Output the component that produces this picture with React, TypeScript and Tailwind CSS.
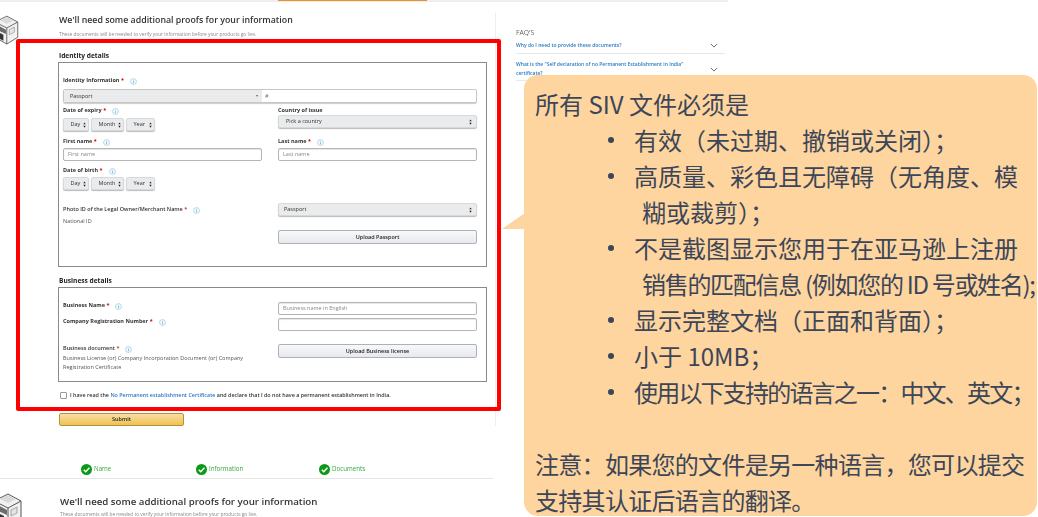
import React from "react";

const Info = () => (
  <svg viewBox="0 0 10 10" className="inline-block w-[7px] h-[7px] ml-[6px] shrink-0 relative top-[1px]">
    <circle cx="5" cy="5" r="4.3" fill="#eef7fb" stroke="#8fc3dc" strokeWidth="0.8" />
    <path d="M5 2.6v.8M5 4.4v3" stroke="#5a9dbf" strokeWidth="0.9" fill="none" />
  </svg>
);

const Label = ({ text, req = true, bold = true, info = true, cls = "" }: { text: string; req?: boolean; bold?: boolean; info?: boolean; cls?: string }) => (
  <div className={`h-[10px] pt-[1px] flex items-center whitespace-nowrap text-[5.5px] text-[#333] ${bold ? "font-bold" : "font-semibold"} ${cls}`}>
    <span>{text}</span>
    {req && <span className="text-[#d00] ml-[1.5px]">*</span>}
    {info && <Info />}
  </div>
);

const Updown = () => (
  <svg viewBox="0 0 4 8" className="w-[3px] h-[6px] shrink-0">
    <path d="M2 0.5 3.6 3H.4zM2 7.5 .4 5h3.2z" fill="#222" />
  </svg>
);

const MiniSelect = ({ text, w }: { text: string; w: string }) => (
  <div className={`${w} h-[13px] rounded-[2px] border border-[#d5d9d9] bg-[#eaebed] shadow-[0_1px_1px_#bbb] flex items-center justify-between pl-[6.5px] pr-[2px] text-[5.5px] text-[#333]`}>
    <span>{text}</span>
    <Updown />
  </div>
);

const Dates = () => (
  <div className="flex gap-[2px]">
    <MiniSelect text="Day" w="w-[26px]" />
    <MiniSelect text="Month" w="w-[33px]" />
    <MiniSelect text="Year" w="w-[29px]" />
  </div>
);

const WideSelect = ({ text, pad = "pl-[7px]" }: { text: string; pad?: string }) => (
  <div className={`w-[199px] h-[13px] rounded-[2px] border border-[#d5d9d9] bg-[#eaebed] shadow-[0_1px_1px_#bbb] flex items-center justify-between ${pad} pr-[4px] text-[5.5px] text-[#333]`}>
    <span>{text}</span>
    <Updown />
  </div>
);

const TextBox = ({ ph = "", h = "h-[13px]" }: { ph?: string; h?: string }) => (
  <div className={`w-[199px] ${h} rounded-[2px] border border-[#b5b5b5] bg-white shadow-[inset_0_1px_1px_#e5e5e5] flex items-center pl-[4px] text-[5.5px] text-[#888]`}>
    {ph}
  </div>
);

const UploadBtn = ({ text }: { text: string }) => (
  <div className="w-[199px] h-[14px] rounded-[2px] border border-[#adb1b8] bg-gradient-to-b from-[#f7f8fa] to-[#e7e9ec] flex items-center justify-center text-[5.5px] font-semibold text-[#222]">
    {text}
  </div>
);

const Printer = ({ cls }: { cls: string }) => (
  <svg viewBox="0 0 26 36" className={cls}>
    <path d="M-6 8 8 1l13 7v18L8 34-6 26z" fill="#f1f1f1" stroke="#555" strokeWidth="1" />
    <path d="M-6 8 8 15l13-7M8 15v19" fill="none" stroke="#555" strokeWidth="1" />
    <path d="M-6 10 7 17v5L-6 16z" fill="#6b6b6b" />
    <path d="M0 6 8 2l8 4-8 4z" fill="#d9d9d9" />
    <path d="M11 17l6-3v6l-6 3z" fill="#e5e5e5" stroke="#777" strokeWidth="0.6" />
    <path d="M-2 20l6 3v7l-6-3z" fill="#333" />
  </svg>
);

const Step = ({ text, w }: { text: string; w: string }) => (
  <div className={`${w} flex items-center gap-[2px] text-[6.2px] text-[#35a845]`}>
    <svg viewBox="0 0 12 12" className="w-[11px] h-[11px] shrink-0">
      <circle cx="6" cy="6" r="6" fill="#0b9a17" />
      <path d="M3 6.2 5.2 8.4 9.2 4" stroke="#fff" strokeWidth="1.6" fill="none" />
    </svg>
    <span>{text}</span>
  </div>
);

const Chevron = () => (
  <svg viewBox="0 0 10 6" className="w-[8px] h-[5px] shrink-0">
    <path d="M1 1l4 4 4-4" fill="none" stroke="#666" strokeWidth="1.2" />
  </svg>
);

type Line = { t: string; kind: "head" | "bullet" | "cont" | "note" | "gap"; track?: string };

const lines: Line[] = [
  { t: "所有 SIV 文件必须是", kind: "head" },
  { t: "有效（未过期、撤销或关闭）；", kind: "bullet" },
  { t: "高质量、彩色且无障碍（无角度、模", kind: "bullet" },
  { t: "糊或裁剪）；", kind: "cont" },
  { t: "不是截图显示您用于在亚马逊上注册", kind: "bullet" },
  { t: "销售的匹配信息 (例如您的 ID 号或姓名);", kind: "cont", track: "tracking-[-1.3px]" },
  { t: "显示完整文档（正面和背面）；", kind: "bullet" },
  { t: "小于 10MB；", kind: "bullet" },
  { t: "使用以下支持的语言之一：中文、英文；", kind: "bullet", track: "tracking-[-1.8px]" },
  { t: "", kind: "gap" },
  { t: "注意：如果您的文件是另一种语言，您可以提交", kind: "note", track: "tracking-[-0.7px]" },
  { t: "支持其认证后语言的翻译。", kind: "note", track: "tracking-[-0.7px]" },
];

export default function App() {
  return (
    <div className="relative w-[1038px] h-[517px] overflow-hidden bg-white font-['Open_Sans','Noto_Sans_CJK_SC',sans-serif]">
      <div className="blur-[0.3px]">
        <div className="w-[728px] h-[2px] bg-[#eeeeee]">
          <div className="ml-[278px] w-[149px] h-[1px] bg-[#e8912d]" />
        </div>
        <div className="flex items-start">
          <div className="w-[496px] shrink-0">
            <div className="relative h-[413px] mt-[11px] pl-[58px] border-r border-[#eeeeee]">
              <Printer cls="absolute left-0 top-[1px] w-[22px] h-[33px]" />
              <div className="ml-[1px] h-[14px] pt-[2px] flex items-center whitespace-nowrap text-[8.8px] font-semibold text-[#333]">
                We'll need some additional proofs for your information
              </div>
              <div className="ml-[1px] mt-[3px] h-[8px] pt-[2px] flex items-center whitespace-nowrap text-[4.8px] text-[#888]">
                These documents will be needed to verify your information before your products go live.
              </div>
              <div className="ml-[1px] mt-[12px] h-[10px] pt-[2px] flex items-center text-[6.6px] font-bold text-[#222]">Identity details</div>

              <div className="mt-[2px] w-[429px] h-[205px] border border-[#8a8a8a] pl-[4px]">
                <Label text="Identity Information" cls="mt-[12px]" />
                <div className="mt-[4px] w-[414px] h-[14px] flex rounded-[2px] border border-[#c4c6c8] shadow-[0_1px_1px_#ccc] text-[5.5px] text-[#333]">
                  <div className="w-[198px] bg-[#eaebed] flex items-center justify-between pl-[6px] pr-[4px]">
                    <span>Passport</span>
                    <svg viewBox="0 0 4 3" className="w-[2px] h-[2px]"><path d="M0 0h4L2 3z" fill="#333" /></svg>
                  </div>
                  <div className="flex-1 flex items-center pl-[3px] text-[#777]">#</div>
                </div>

                <div className="mt-[2px] flex gap-[16px]">
                  <div className="w-[199px]">
                    <Label text="Date of expiry" />
                    <div className="mt-[3px]"><Dates /></div>
                  </div>
                  <div className="w-[199px]">
                    <Label text="Country of issue" req={false} info={false} />
                    <WideSelect text="Pick a country" />
                  </div>
                </div>

                <div className="mt-[5px] flex gap-[16px]">
                  <div className="w-[199px]">
                    <Label text="First name" />
                    <div className="mt-[2px]"><TextBox ph="First name" /></div>
                  </div>
                  <div className="w-[199px]">
                    <Label text="Last name" />
                    <div className="mt-[2px]"><TextBox ph="Last name" /></div>
                  </div>
                </div>

                <Label text="Date of birth" cls="mt-[4px]" />
                <div className="mt-[2px]"><Dates /></div>

                <div className="mt-[13px] flex gap-[16px]">
                  <div className="w-[199px]">
                    <Label text="Photo ID of the Legal Owner/Merchant Name" bold={false} cls="mt-[1px]" />
                    <div className="mt-[1px] h-[10px] pt-[2px] flex items-center text-[5.5px] text-[#555]">National ID</div>
                  </div>
                  <div className="w-[199px]">
                    <WideSelect text="Passport" pad="pl-[5px]" />
                    <div className="mt-[14px]"><UploadBtn text="Upload Passport" /></div>
                  </div>
                </div>
              </div>

              <div className="ml-[1px] mt-[8px] h-[10px] pt-[2px] flex items-center text-[6.6px] font-bold text-[#222]">Business details</div>
              <div className="mt-[2px] w-[429px] h-[95px] border border-[#8a8a8a] pl-[4px] pt-[14px]">
                <div className="flex gap-[16px]">
                  <div className="w-[199px]"><Label text="Business Name" cls="-mt-[2px]" /></div>
                  <TextBox ph="Business name in English" />
                </div>
                <div className="mt-[3px] flex gap-[16px]">
                  <div className="w-[199px]"><Label text="Company Registration Number" cls="-mt-[2px]" /></div>
                  <TextBox />
                </div>
                <div className="mt-[13px] flex gap-[16px]">
                  <div className="w-[199px]">
                    <Label text="Business document" bold={false} cls="-mt-[1px]" />
                    <div className="pt-[1px] text-[5.5px] leading-[9px] text-[#555]">
                      Business License (or) Company Incorporation Document (or) Company<br />Registration Certificate
                    </div>
                  </div>
                  <UploadBtn text="Upload Business license" />
                </div>
              </div>

              <div className="mt-[9px] ml-[2px] h-[9px] flex items-center gap-[3px] whitespace-nowrap text-[5.4px] font-semibold text-[#333]">
                <div className="w-[7px] h-[7px] rounded-[1px] border border-[#999] bg-white shrink-0" />
                <span>
                  I have read the <span className="text-[#2b7ac4]">No Permanent establishment Certificate</span> and declare that I do not have a permanent establishment in India.
                </span>
              </div>

              <div className="mt-[13px] ml-[1px] w-[125px] h-[13px] rounded-[2px] border border-[#b8923a] bg-gradient-to-b from-[#f7dfa5] to-[#f0c14b] flex items-center justify-center text-[5.5px] font-semibold text-[#222]">
                Submit
              </div>
            </div>

            <div className="mt-[37px] pl-[81px] flex h-[12px]">
              <Step text="Name" w="w-[115px]" />
              <Step text="Information" w="w-[123px]" />
              <Step text="Documents" w="w-[100px]" />
            </div>
            <div className="mt-[3px] w-[493px] h-[1px] bg-[#e5e5e5]" />

            <div className="relative pl-[60px] pt-[15px]">
              <Printer cls="absolute left-0 top-[14px] w-[26px] h-[36px]" />
              <div className="h-[14px] pt-[2px] flex items-center whitespace-nowrap text-[9.7px] font-semibold text-[#333]">
                We'll need some additional proofs for your information
              </div>
              <div className="mt-[3px] h-[8px] flex items-center whitespace-nowrap text-[4.8px] text-[#888]">
                These documents will be needed to verify your information before your products go live.
              </div>
            </div>
          </div>

          <div className="ml-[20px] w-[209px] pt-[26px]">
            <div className="h-[9px] pt-[2px] flex items-center text-[6.8px] text-[#666]">FAQ'S</div>
            <div className="mt-[3px] h-[14px] border-b border-[#e8e8e8] pb-[2px] flex items-center justify-between pr-[7px] text-[5px] font-semibold text-[#2b7ac4] whitespace-nowrap">
              <span>Why do I need to provide these documents?</span>
              <Chevron />
            </div>
            <div className="h-[27px] border-b border-[#e8e8e8] pt-[4px] flex items-center justify-between pr-[7px] text-[5px] leading-[9px] font-semibold text-[#2b7ac4]">
              <span className="w-[180px]">What is the "Self declaration of no Permanent Establishment in India" certificate?</span>
              <Chevron />
            </div>
          </div>
        </div>
      </div>

      <div className="absolute left-[16px] top-[39px] w-[485px] h-[372px] border-4 border-[#ff0000] rounded-[2px]" />

      <div className="absolute left-[502px] top-[213px] w-[23px] h-[16px] bg-[#fed59f] [clip-path:polygon(100%_0,100%_100%,0_100%)]" />
      <div className="absolute left-[524px] top-[75px] w-[513px] h-[441px] rounded-[14px] bg-[#fed59f] pt-[11px] pl-[11px] text-[24px] leading-[36px] text-[#3c4658] font-['Noto_Sans_CJK_SC',sans-serif] font-normal">
        {lines.map((l, i) => (
          <div key={i} className={`h-[36px] whitespace-nowrap relative ${l.track ?? ""}`}>
            {l.kind === "bullet" && (
              <>
                <span className="absolute left-[73px] top-[15px] w-[6px] h-[6px] rounded-full bg-[#3c4658]" />
                <span className="ml-[99px]">{l.t}</span>
              </>
            )}
            {l.kind === "cont" && <span className="ml-[107px]">{l.t}</span>}
            {(l.kind === "head" || l.kind === "note") && <span>{l.t}</span>}
          </div>
        ))}
      </div>
    </div>
  );
}
